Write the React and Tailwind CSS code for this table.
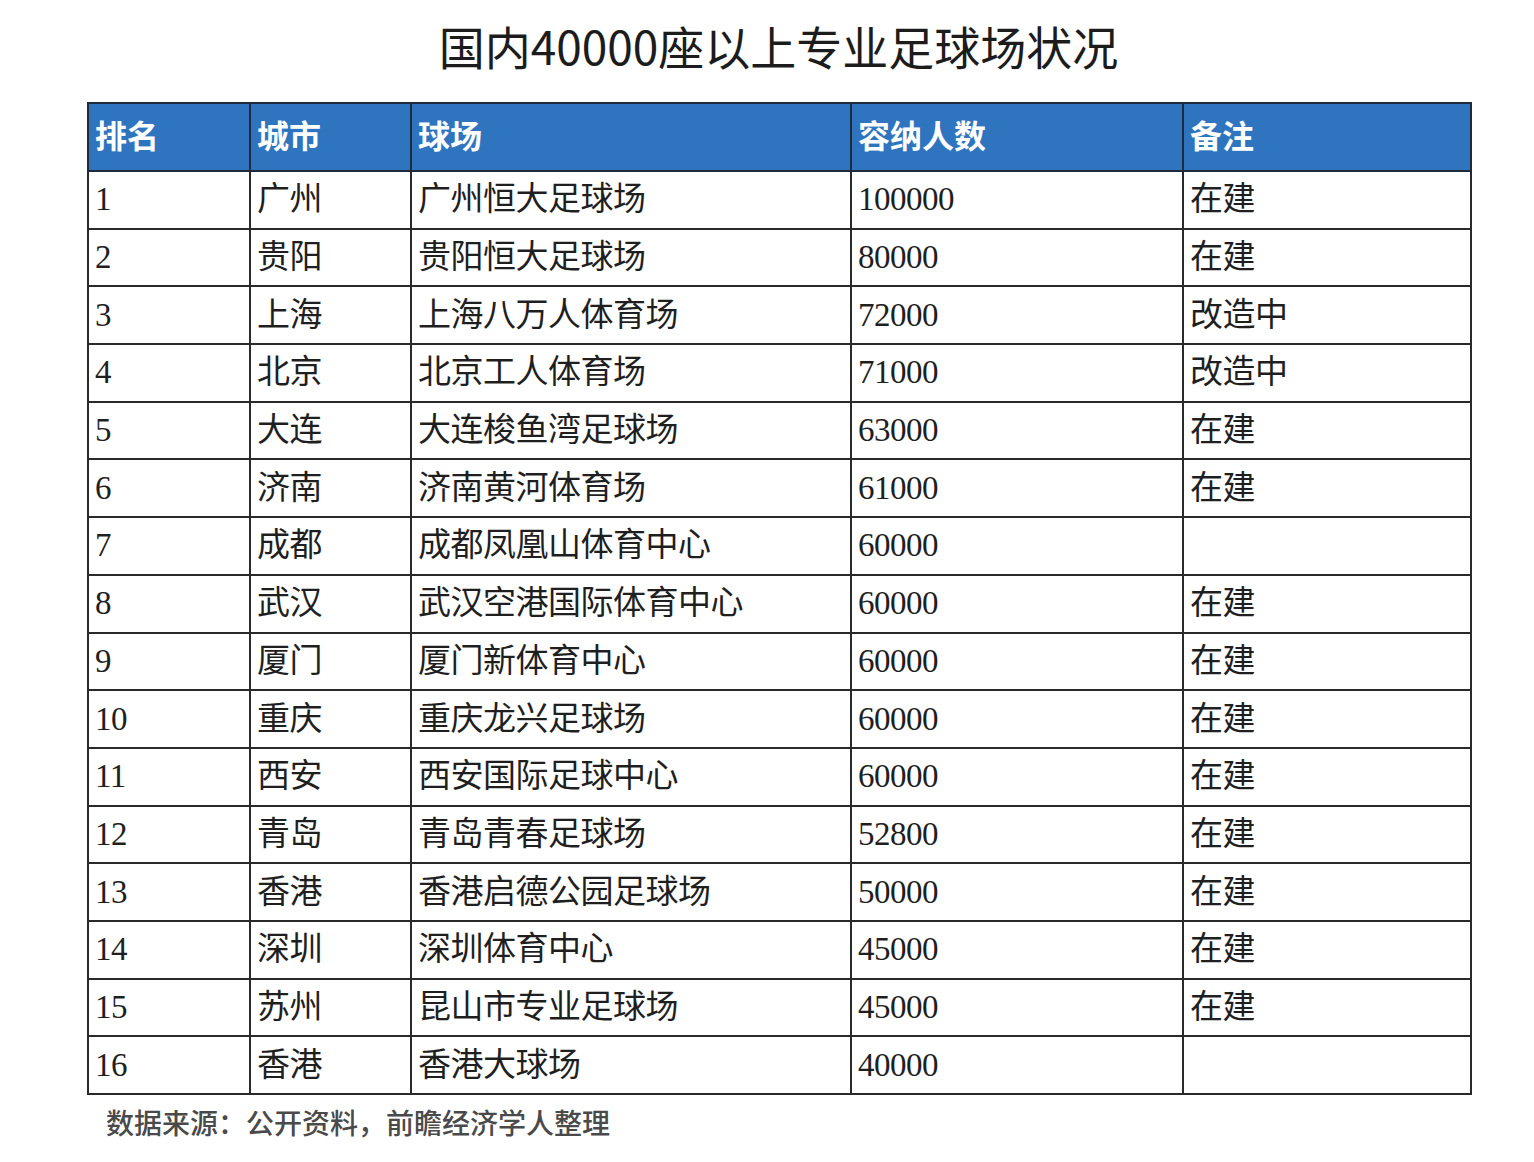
import React from "react";

// 国内40000座以上专业足球场数据
const stadiums = [
  [1, "广州", "广州恒大足球场", "100000", "在建"],
  [2, "贵阳", "贵阳恒大足球场", "80000", "在建"],
  [3, "上海", "上海八万人体育场", "72000", "改造中"],
  [4, "北京", "北京工人体育场", "71000", "改造中"],
  [5, "大连", "大连梭鱼湾足球场", "63000", "在建"],
  [6, "济南", "济南黄河体育场", "61000", "在建"],
  [7, "成都", "成都凤凰山体育中心", "60000", ""],
  [8, "武汉", "武汉空港国际体育中心", "60000", "在建"],
  [9, "厦门", "厦门新体育中心", "60000", "在建"],
  [10, "重庆", "重庆龙兴足球场", "60000", "在建"],
  [11, "西安", "西安国际足球中心", "60000", "在建"],
  [12, "青岛", "青岛青春足球场", "52800", "在建"],
  [13, "香港", "香港启德公园足球场", "50000", "在建"],
  [14, "深圳", "深圳体育中心", "45000", "在建"],
  [15, "苏州", "昆山市专业足球场", "45000", "在建"],
  [16, "香港", "香港大球场", "40000", ""],
];

const headers = ["排名", "城市", "球场", "容纳人数", "备注"];
const widths = ["w-[162px]", "w-[161px]", "w-[440px]", "w-[332px]", "w-[288px]"];

const App = () => {
  return (
    <div className="min-h-[1162px] w-[1534px] bg-white">
      <div className="ml-[87px] w-[1383px] pt-[20px]">
        {/* 标题 */}
        <h1
          className="text-center text-[46px] leading-[50px] text-[#1c1c1c]"
          style={{fontFamily: '"Noto Sans CJK SC", sans-serif'}}
        >
          国内40000座以上专业足球场状况
        </h1>

        {/* 表格 */}
        <table className="mt-[32px] w-[1383px] table-fixed border-collapse border-2 border-[#262626]">
          <colgroup>
            {widths.map((w, i) => (
              <col key={i} className={w} />
            ))}
          </colgroup>
          <thead>
            <tr className="h-[68px] bg-[#2e74bf]">
              {headers.map((h) => (
                <th
                  key={h}
                  className="border-2 border-[#1f2a3a] pb-[6px] pl-[6px] text-left align-middle text-[32px] font-bold text-white"
                  style={{fontFamily: '"Noto Sans CJK SC", sans-serif'}}
                >
                  {h}
                </th>
              ))}
            </tr>
          </thead>
          <tbody
            className="text-[33px] text-[#1f1f1f]"
            style={{fontFamily: '"Liberation Serif", "Noto Sans CJK SC", serif'}}
          >
            {stadiums.map((row) => (
              <tr key={row[0]} className="h-[57.7px]">
                {row.map((cell, i) => (
                  <td
                    key={i}
                    className="border-2 border-[#2a2a2a] pl-[6px] align-middle leading-none tracking-[-0.5px]"
                  >
                    {cell}
                  </td>
                ))}
              </tr>
            ))}
          </tbody>
        </table>

        {/* 数据来源 */}
        <p
          className="mt-[9px] pl-[19px] text-[28px] leading-[36px] font-medium text-[#4a4a4a]"
          style={{fontFamily: '"Noto Sans CJK SC", sans-serif'}}
        >
          数据来源：公开资料，前瞻经济学人整理
        </p>
      </div>
    </div>
  );
};

export default App;
